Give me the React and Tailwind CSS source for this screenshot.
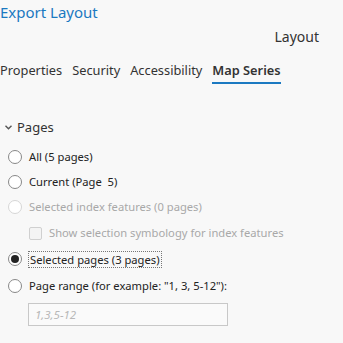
import React from "react";

const Radio = ({ checked, disabled }) => (
  <span
    className={`flex h-[14px] w-[14px] shrink-0 items-center justify-center rounded-full border bg-white ${
      disabled ? "border-[#d6d6d6] bg-[#f4f4f4]" : "border-[#888888]"
    }`}
  >
    {checked && <span className="h-[8px] w-[8px] rounded-full bg-[#222222]" />}
  </span>
);

export default function App() {
  return (
    <div
      className="h-[343px] w-[343px] overflow-hidden bg-[#f8f8f8] text-[#222222]"
      style={{ fontFamily: '"Noto Sans", "Open Sans", sans-serif' }}
    >
      <div className="pt-[2px] text-[15px] leading-[20px] text-[#1b79c1]">Export Layout</div>
      <div className="mt-[5px] flex justify-end pr-[24px] text-[14px] leading-[20px] text-[#333333]">Layout</div>
      <div className="mt-[13px] flex h-[24px] gap-[10px] text-[12.8px] leading-[20px] text-[#333333]">
        <span>Properties</span>
        <span>Security</span>
        <span>Accessibility</span>
        <span className="flex flex-col font-semibold">
          <span>Map Series</span>
          <span className="mt-[2px] h-[2px] bg-[#1b79c1]" />
        </span>
      </div>
      <div className="mt-[33px] flex items-center gap-[5px] pl-[5px] text-[13px] leading-[20px] text-[#333333]">
        <svg width="7" height="5" viewBox="0 0 7 5" className="mt-[1px]">
          <path d="M0.5 0.8 L3.5 3.8 L6.5 0.8" fill="none" stroke="#555" strokeWidth="1.4" />
        </svg>
        <span>Pages</span>
      </div>
      <div className="mt-[7px] flex flex-col pl-[8px] text-[11.2px] leading-[16px]">
        <div className="flex h-[25px] items-center gap-[7px]">
          <Radio />
          <span>All (5 pages)</span>
        </div>
        <div className="flex h-[25px] items-center gap-[7px]">
          <Radio />
          <span>Current (Page&nbsp; 5)</span>
        </div>
        <div className="flex h-[26px] items-center gap-[7px] text-[#a8a8a8]">
          <Radio disabled />
          <span>Selected index features (0 pages)</span>
        </div>
        <div className="flex h-[26px] items-center gap-[7px] pl-[21px] text-[#a8a8a8]">
          <span className="h-[13px] w-[13px] rounded-[2px] border border-[#d0d0d0] bg-[#f4f4f4]" />
          <span>Show selection symbology for index features</span>
        </div>
        <div className="flex h-[26px] items-center gap-[6px]">
          <Radio checked />
          <span className="border border-dotted border-[#777777] px-[1px] leading-[15px]">Selected pages (3 pages)</span>
        </div>
        <div className="flex h-[27px] items-center gap-[7px]">
          <Radio />
          <span>Page range (for example: "1, 3, 5-12"):</span>
        </div>
        <div className="ml-[20px] mt-[4px] flex h-[23px] w-[200px] items-center border border-[#c8c8c8] bg-[#fafafa] px-[6px] text-[11.5px] italic text-[#b8b8b8]">
          1,3,5-12
        </div>
      </div>
    </div>
  );
}
